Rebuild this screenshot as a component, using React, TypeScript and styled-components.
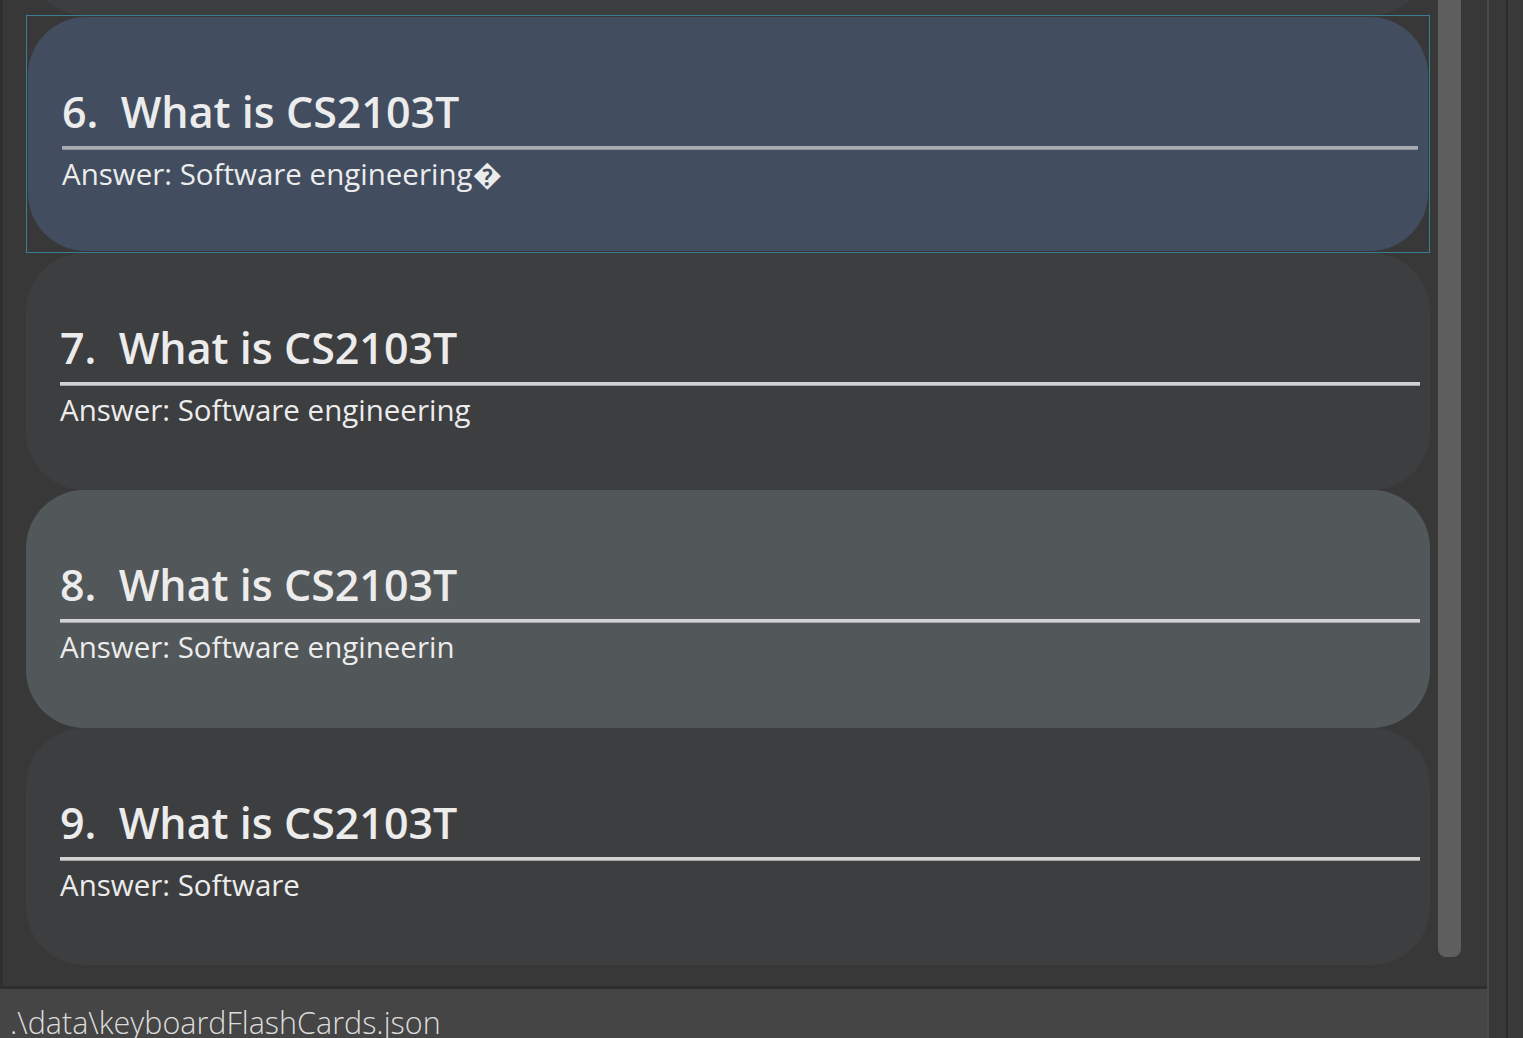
import React from 'react';
import styled, { createGlobalStyle } from 'styled-components';

const GlobalStyle = createGlobalStyle`
  html, body {
    margin: 0;
    padding: 0;
    background: #383838;
    overflow: hidden;
  }
`;

type Tone = 'dark' | 'light' | 'selected';

const cardColors: Record<Tone, string> = {
  dark: '#3d3e40',
  light: '#525759',
  selected: '#424e60',
};

// Layout
const Window = styled.div`
  display: flex;
  width: 1523px;
  height: 1038px;
  background: #383838;
  font-family: 'Open Sans', 'Noto Sans', sans-serif;
  overflow: hidden;
`;

const MainColumn = styled.div`
  display: flex;
  flex-direction: column;
  width: 1487px;
  height: 100%;
`;

const ListPanel = styled.div`
  display: flex;
  height: 989px;
  box-sizing: border-box;
  border-left: 3px solid #2f2f2f;
  border-bottom: 3px solid #2e2e2e;
  padding-left: 23px;
  flex-shrink: 0;
`;

const Viewport = styled.div`
  width: 1404px;
  height: 100%;
  overflow: hidden;
`;

const CellStack = styled.div`
  display: flex;
  flex-direction: column;
  margin-top: -222.5px;
`;

const Cell = styled.div<{ $selected?: boolean }>`
  box-sizing: border-box;
  height: 237.5px;
  flex-shrink: 0;
  display: flex;
  padding: ${(p) => (p.$selected ? '1px' : '0')};
  border: ${(p) => (p.$selected ? '1px solid #3b7d91' : 'none')};
`;

const Card = styled.div<{ $tone: Tone }>`
  flex: 1;
  display: flex;
  flex-direction: column;
  box-sizing: border-box;
  padding: 69px 10px 0 34px;
  background: ${(p) => cardColors[p.$tone]};
  border-radius: 58px;
`;

const CardShape = styled.div<{ $tone: Tone }>`
  flex: 1;
  background: ${(p) => cardColors[p.$tone]};
  border-radius: 58px;
`;

const Title = styled.div`
  font-size: 43px;
  line-height: 52px;
  font-weight: 600;
  color: #ececec;
  white-space: pre;
`;

const Rule = styled.div<{ $dim?: boolean }>`
  height: 3px;
  margin-top: 8px;
  background: ${(p) => (p.$dim ? '#a9abaf' : '#d2d2d2')};
  border-bottom: 1px solid ${(p) => (p.$dim ? '#8f949b' : '#a6a6a6')};
`;

const Answer = styled.div`
  margin-top: 6px;
  font-size: 29.5px;
  line-height: 36px;
  color: #ececec;
  white-space: pre;
`;

const ScrollTrack = styled.div`
  width: 23px;
  margin-left: 8px;
  height: 100%;
`;

const ScrollThumb = styled.div`
  height: 957px;
  background: #5e5e5e;
  border-radius: 0 0 8px 8px;
`;

const StatusBar = styled.div`
  flex: 1;
  background: #454545;
  padding-left: 10px;
  overflow: hidden;
`;

const StatusText = styled.div`
  font-size: 30.5px;
  font-weight: 300;
  line-height: 68px;
  margin-top: -1px;
  color: #dcdcdc;
`;

const SideDivider = styled.div`
  width: 2px;
  background: #4a4a4a;
`;

const SideGap = styled.div`
  width: 17px;
  background: #383838;
`;

const SideEdge = styled.div`
  width: 2px;
  background: #2c2c2c;
`;

const SideFill = styled.div`
  flex: 1;
  background: #3a3a3a;
`;

interface FlashCard {
  index: number;
  question: string;
  answer: string;
  tone: Tone;
}

// card 5 is scrolled almost out of view: only its rounded bottom shows
const cards: FlashCard[] = [
  { index: 6, question: 'What is CS2103T', answer: 'Answer: Software engineering\uFFFD', tone: 'selected' },
  { index: 7, question: 'What is CS2103T', answer: 'Answer: Software engineering', tone: 'dark' },
  { index: 8, question: 'What is CS2103T', answer: 'Answer: Software engineerin', tone: 'light' },
  { index: 9, question: 'What is CS2103T', answer: 'Answer: Software', tone: 'dark' },
];

const App: React.FC = () => {
  return (
    <>
      <GlobalStyle />
      <Window>
        <MainColumn>
          <ListPanel>
            <Viewport>
              <CellStack>
                <Cell>
                  <CardShape $tone="dark" />
                </Cell>
                {cards.map((c) => (
                  <Cell key={c.index} $selected={c.tone === 'selected'}>
                    <Card $tone={c.tone}>
                      <Title>{`${c.index}.  ${c.question}`}</Title>
                      <Rule $dim={c.tone === 'selected'} />
                      <Answer>{c.answer}</Answer>
                    </Card>
                  </Cell>
                ))}
              </CellStack>
            </Viewport>
            <ScrollTrack>
              <ScrollThumb />
            </ScrollTrack>
          </ListPanel>
          <StatusBar>
            <StatusText>.\data\keyboardFlashCards.json</StatusText>
          </StatusBar>
        </MainColumn>
        <SideDivider />
        <SideGap />
        <SideEdge />
        <SideFill />
      </Window>
    </>
  );
};

export default App;
